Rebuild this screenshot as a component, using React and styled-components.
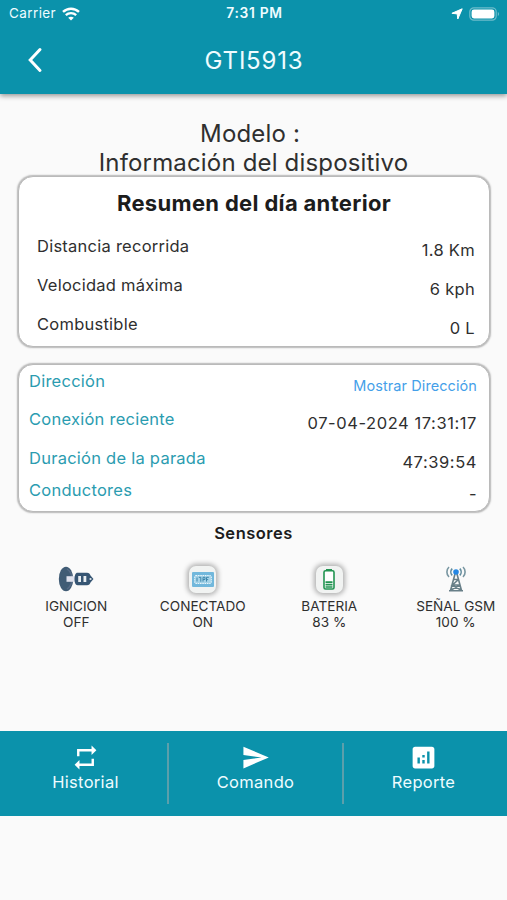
import React from "react";
import styled, { createGlobalStyle } from "styled-components";
import { MdAnalytics, MdRepeat, MdSend } from "react-icons/md";

const GlobalStyle = createGlobalStyle`
  * {
    box-sizing: border-box;
  }
  body {
    margin: 0;
    background-color: #fafafa;
    color: #2f2f2f;
    font-family: "Inter", "Liberation Sans", sans-serif;
  }
`;
const StPage = styled.div`
  width: 507px;
  height: 900px;
  overflow: hidden;
  display: flex;
  flex-direction: column;
`;
const StHeader = styled.header`
  height: 94px;
  flex-shrink: 0;
  background-color: #0b92ab;
  color: #effcff;
  box-shadow: 0 2px 5px rgba(0, 0, 0, 0.4);
`;
const StStatusBar = styled.div`
  height: 27px;
  padding: 0 7px 0 9px;
  display: grid;
  grid-template-columns: 1fr auto 1fr;
  align-items: center;
  font-size: 13.5px;
  line-height: 27px;
`;
const StStatusGroup = styled.div`
  display: flex;
  align-items: center;
  gap: 6px;
  letter-spacing: 0.4px;
  justify-content: ${(props) => (props.$end ? "flex-end" : "flex-start")};
`;
const StClock = styled.div`
  font-weight: 600;
  font-size: 13.8px;
  letter-spacing: 0.7px;
`;
const StNavBar = styled.div`
  height: 66px;
  display: grid;
  grid-template-columns: 70px 1fr 70px;
  align-items: center;
`;
const StBackButton = styled.button`
  height: 66px;
  padding: 0;
  border: 0;
  background: none;
  color: #effcff;
  display: flex;
  align-items: center;
  justify-content: center;
  cursor: pointer;
`;
const StTitle = styled.h1`
  margin: 0;
  padding-left: 1px;
  text-align: center;
  font-size: 24px;
  font-weight: 400;
  letter-spacing: 0.8px;
`;
const StContent = styled.main`
  flex: 1;
  padding-top: 25px;
`;
const StModel = styled.div`
  text-align: center;
  font-size: 24px;
  line-height: 29px;
  letter-spacing: 0.17px;
`;
const StCardList = styled.div`
  margin: -1px 0 0 18px;
  display: flex;
  flex-direction: column;
  gap: 17px;
`;
const StCard = styled.section`
  width: 472px;
  height: ${(props) => props.$height}px;
  padding: ${(props) => props.$padding};
  border: 1px solid #bababa;
  border-radius: 15px;
  background-color: #fff;
  box-shadow: 0 0 1.5px 0.5px #b8b8b8;
`;
const StCardTitle = styled.h2`
  margin: 0 4px 21px 0;
  text-align: center;
  font-size: 22px;
  line-height: 24px;
  font-weight: 700;
  color: #1c1c1c;
  letter-spacing: 0.33px;
`;
const StRow = styled.div`
  height: ${(props) => props.$height}px;
  display: flex;
  justify-content: space-between;
  font-size: 16.5px;
  line-height: 20px;
`;
const StLabel = styled.span`
  color: ${(props) => (props.$accent ? "#2b9cb0" : "inherit")};
  letter-spacing: 0.25px;
`;
const StValue = styled.span`
  padding-top: 4px;
  letter-spacing: ${(props) => (props.$wide ? 0.57 : 0.3)}px;
`;
const StLink = styled.a`
  padding-top: 5px;
  font-size: 14.5px;
  color: #459fe9;
  letter-spacing: 0.08px;
  cursor: pointer;
`;
const StSensorsTitle = styled.h3`
  margin: 10px 0 20px;
  text-align: center;
  font-size: 16.5px;
  line-height: 22px;
  font-weight: 600;
  color: #1c1c1c;
  letter-spacing: 0.5px;
`;
const StSensors = styled.div`
  padding-left: 13px;
  display: grid;
  grid-template-columns: repeat(4, 126.5px);
`;
const StSensor = styled.div`
  display: flex;
  flex-direction: column;
  align-items: center;
  font-size: 13.6px;
  line-height: 16px;
`;
const StSensorIcon = styled.div`
  width: 38px;
  height: 30px;
  margin-bottom: 4px;
  display: flex;
  align-items: center;
  justify-content: center;
`;
const StTile = styled.div`
  width: 27px;
  height: 27px;
  border-radius: 7px;
  background-color: #f1f3f2;
  box-shadow: 0 0 5px 2px rgba(0, 0, 0, 0.3);
  display: flex;
  align-items: center;
  justify-content: center;
`;
const StTabBar = styled.nav`
  height: 85px;
  margin-bottom: 84px;
  flex-shrink: 0;
  background-color: #0b92ab;
  color: #effcff;
  display: flex;
  align-items: center;
`;
const StTab = styled.button`
  width: ${(props) => props.$width}px;
  height: 85px;
  padding: 12px 0 0 ${(props) => props.$shift || 0}px;
  border: 0;
  background: none;
  color: inherit;
  font-family: inherit;
  font-size: 16.5px;
  line-height: 21px;
  letter-spacing: 0.3px;
  display: flex;
  flex-direction: column;
  align-items: center;
  cursor: pointer;
  svg {
    color: #fff;
  }
`;
const StDivider = styled.div`
  width: 2px;
  height: 61px;
  background-color: #5c9fab;
`;

const WifiIcon = () => (
  <svg width="18" height="14" viewBox="0 0 18 14" fill="none">
    <path d="M1 4.9C5.6.6 12.4.6 17 4.9" stroke="#fff" strokeWidth="2.4" />
    <path d="M3.8 8.2c2.9-2.7 7.5-2.7 10.4 0" stroke="#fff" strokeWidth="2.3" />
    <path d="M6.2 10.7c1.6-1.4 4-1.4 5.6 0L9 13.6z" fill="#fff" />
  </svg>
);

const LocationIcon = () => (
  <svg width="12" height="12" viewBox="0 0 12 12">
    <path
      d="M11.2.8 6.8 11 6.2 5.9.9 5.3z"
      fill="#fff"
      stroke="#fff"
      strokeWidth="1"
      strokeLinejoin="round"
    />
  </svg>
);

const PhoneBatteryIcon = () => (
  <svg width="31" height="14" viewBox="0 0 31 14">
    <rect x=".8" y=".8" width="26.4" height="12.4" rx="4" fill="none" stroke="#6dbccb" strokeWidth="1.2" />
    <rect x="2.6" y="2.5" width="22.8" height="9" rx="2.4" fill="#fff" />
    <path d="M28.8 5v4c1.7-.6 1.7-3.4 0-4z" fill="#6dbccb" />
  </svg>
);

const IgnitionIcon = () => (
  <svg width="38" height="30" viewBox="0 0 38 30">
    <ellipse cx="9" cy="15" rx="7.2" ry="12.2" fill="#405c75" />
    <path d="M10 5c3.5 2.5 5 6 5 10s-1.500 7.500-5 10" fill="none" stroke="#566b86" strokeWidth="1.500" />
    <path d="M9.500 12.200H19v5.600H9.500z" fill="#dfe2ee" />
    <path
      d="M20.500 8.800h9.500c2 0 3 1.200 3.500 2.700l3 3.500-3 3.500c-.5 1.500-1.500 2.700-3.500 2.700h-9.500c-2 0-3-2.700-3-6.200s1-6.200 3-6.200z"
      fill="#365573"
    />
    <path d="M21.2 12H24v6h-2.800zM26.500 12h2.800v6h-2.800z" fill="#e9eef2" />
    <circle cx="33.5" cy="15" r="1.100" fill="#dce4ea" />
  </svg>
);

const ConnectedIcon = () => (
  <svg width="22" height="15" viewBox="0 0 22 15">
    <rect width="22" height="15" rx="1" fill="#72b8dc" />
    <rect x="2.7" y="3.500" width="16.600" height="8" rx="1" fill="#a5d3e8" stroke="#eaf6fb" strokeDasharray="1.5 .8" />
    <path
      d="M5 5.5v4M6.8 5.300h2v4.400M11 9.600V5.300h2v2.200h-2M14.500 9.600V5.300h2.300M14.500 7.600h1.700"
      fill="none"
      stroke="#3c86ab"
      strokeWidth="1"
    />
  </svg>
);

const BatteryIcon = () => (
  <svg width="12" height="22" viewBox="0 0 12 22">
    <path d="M3 3V1h6v2z" fill="#219451" />
    <rect x="1" y="2.8" width="10" height="18.2" rx="1.5" fill="#fff" stroke="#219451" strokeWidth="1.6" />
    <path d="M2.5 13.2h7v2h-7zM2.5 15.9h7v1.7h-7zM2.5 18.2h7v1.5h-7z" fill="#219451" />
  </svg>
);

const AntennaIcon = () => (
  <svg width="20" height="26" viewBox="0 0 20 26" fill="none">
    <path d="M3 1C.2 3.5.2 8.5 3 11M17 1c2.8 2.500 2.800 7.500 0 10" stroke="#7896a1" strokeWidth="1.6" />
    <path d="M6.2 2.600c-1.800 1.900-1.800 4.900 0 6.800M13.800 2.600c1.800 1.900 1.800 4.900 0 6.800" stroke="#608b9c" strokeWidth="1.6" />
    <path
      d="M9 8 4.5 24.500M11 8l4.500 16.500M7.500 13.500h5M12.500 13.500l-6 5.500h8M6 19l9 5M14 19l-9 5M3 24.800h14"
      stroke="#687f88"
      strokeWidth="1.6"
    />
    <circle cx="10" cy="6" r="2.8" fill="#2487e4" />
  </svg>
);

const summary = [
  { label: "Distancia recorrida", value: "1.8 Km" },
  { label: "Velocidad máxima", value: "6 kph" },
  { label: "Combustible", value: "0 L" },
];

const sensors = [
  { name: "IGNICION", value: "OFF", icon: <IgnitionIcon /> },
  { name: "CONECTADO", value: "ON", icon: <ConnectedIcon />, tile: true },
  { name: "BATERIA", value: "83 %", icon: <BatteryIcon />, tile: true },
  { name: "SEÑAL GSM", value: "100 %", icon: <AntennaIcon /> },
];

const App = () => {
  return (
    <StPage>
      <GlobalStyle />
      <StHeader>
        <StStatusBar>
          <StStatusGroup>
            <span>Carrier</span>
            <WifiIcon />
          </StStatusGroup>
          <StClock>7:31 PM</StClock>
          <StStatusGroup $end>
            <LocationIcon />
            <PhoneBatteryIcon />
          </StStatusGroup>
        </StStatusBar>
        <StNavBar>
          <StBackButton aria-label="Volver">
            <svg width="16" height="26" viewBox="0 0 16 26" fill="none">
              <path d="M13 2.5 3.2 13 13 23.5" stroke="#fff" strokeWidth="3" strokeLinecap="round" />
            </svg>
          </StBackButton>
          <StTitle>GTI5913</StTitle>
        </StNavBar>
      </StHeader>

      <StContent>
        <StModel>Modelo :&nbsp;</StModel>
        <StModel>Información del dispositivo</StModel>

        <StCardList>
          <StCard $height={171} $padding="14px 14px 0 18px">
            <StCardTitle>Resumen del día anterior</StCardTitle>
            {summary.map((item) => (
              <StRow key={item.label} $height={39}>
                <StLabel>{item.label}</StLabel>
                <StValue>{item.value}</StValue>
              </StRow>
            ))}
          </StCard>

          <StCard $height={148} $padding="6px 12px 0 10px">
            <StRow $height={38}>
              <StLabel $accent>Dirección</StLabel>
              <StLink>Mostrar Dirección</StLink>
            </StRow>
            <StRow $height={39}>
              <StLabel $accent>Conexión reciente</StLabel>
              <StValue $wide>07-04-2024 17:31:17</StValue>
            </StRow>
            <StRow $height={32}>
              <StLabel $accent>Duración de la parada</StLabel>
              <StValue $wide>47:39:54</StValue>
            </StRow>
            <StRow $height={30}>
              <StLabel $accent>Conductores</StLabel>
              <StValue>-</StValue>
            </StRow>
          </StCard>
        </StCardList>

        <StSensorsTitle>Sensores</StSensorsTitle>
        <StSensors>
          {sensors.map((sensor) => (
            <StSensor key={sensor.name}>
              <StSensorIcon>
                {sensor.tile ? <StTile>{sensor.icon}</StTile> : sensor.icon}
              </StSensorIcon>
              <span>{sensor.name}</span>
              <span>{sensor.value}</span>
            </StSensor>
          ))}
        </StSensors>
      </StContent>

      <StTabBar>
        <StTab $width={167} $shift={4}>
          <MdRepeat size={29} />
          Historial
        </StTab>
        <StDivider />
        <StTab $width={173}>
          <MdSend size={29} />
          Comando
        </StTab>
        <StDivider />
        <StTab $width={159}>
          <MdAnalytics size={29} />
          Reporte
        </StTab>
      </StTabBar>
    </StPage>
  );
};

export default App;
